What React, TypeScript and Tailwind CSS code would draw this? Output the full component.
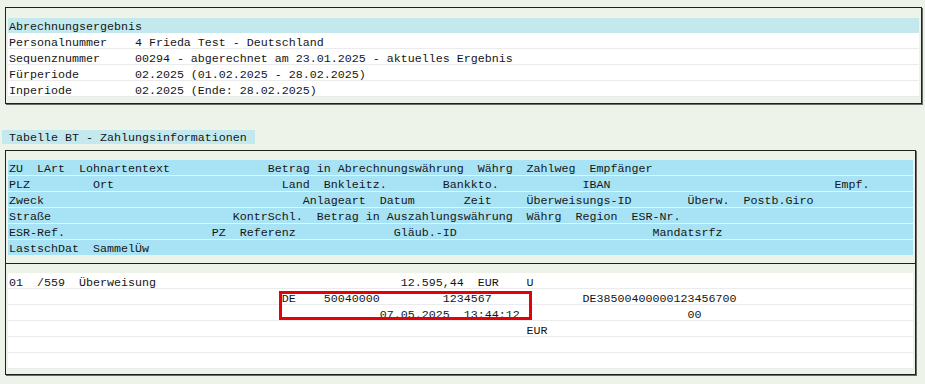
const at = (...segs: [number, string][]) => {
  let s = "";
  for (const [col, text] of segs) s = s.padEnd(col, " ") + text;
  return s;
};

const summary = [
  at([0, "Personalnummer"], [18, "4 Frieda Test - Deutschland"]),
  at([0, "Sequenznummer"], [18, "00294 - abgerechnet am 23.01.2025 - aktuelles Ergebnis"]),
  at([0, "Fürperiode"], [18, "02.2025 (01.02.2025 - 28.02.2025)"]),
  at([0, "Inperiode"], [18, "02.2025 (Ende: 28.02.2025)"]),
];

const headers = [
  at([0, "ZU"], [4, "LArt"], [10, "Lohnartentext"], [37, "Betrag in Abrechnungswährung"], [67, "Währg"], [74, "Zahlweg"], [83, "Empfänger"]),
  at([0, "PLZ"], [12, "Ort"], [39, "Land"], [45, "Bnkleitz."], [62, "Bankkto."], [82, "IBAN"], [118, "Empf."]),
  at([0, "Zweck"], [42, "Anlageart"], [53, "Datum"], [65, "Zeit"], [74, "Überweisungs-ID"], [97, "Überw."], [105, "Postb.Giro"]),
  at([0, "Straße"], [32, "KontrSchl."], [44, "Betrag in Auszahlungswährung"], [74, "Währg"], [81, "Region"], [89, "ESR-Nr."]),
  at([0, "ESR-Ref."], [29, "PZ"], [33, "Referenz"], [55, "Gläub.-ID"], [92, "Mandatsrfz"]),
  at([0, "LastschDat"], [12, "SammelÜw"]),
];

const data = [
  at([0, "01"], [4, "/559"], [10, "Überweisung"], [56, "12.595,44"], [67, "EUR"], [74, "U"]),
  at([39, "DE"], [45, "50040000"], [62, "1234567"], [82, "DE38500400000123456700"]),
  at([53, "07.05.2025"], [65, "13:44:12"], [97, "00"]),
  at([74, "EUR"]),
  "",
  "",
];

export default function App() {
  return (
    <div className="w-[925px] h-[384px] overflow-hidden bg-[#eef3e9] pt-[7px] pl-[5px] font-['Liberation_Mono','Courier_New',monospace] text-[11.67px] text-[#161616] whitespace-pre">
      {/* Abrechnungsergebnis */}
      <div className="w-[917px] h-[97px] border border-[#1f1f1f] shadow-[1px_1px_0_#6b6b6b] pt-[10px] px-[2px]">
        <div className="h-[15px] leading-[15px] pt-[2px] bg-[#c3e9ee] pl-[1px]">Abrechnungsergebnis</div>
        {summary.map((line, i) => (
          <div key={i} className="h-[16px] leading-[16px] pt-[2px] bg-white border-b border-[#ebebeb] pl-[1px]">
            {line}
          </div>
        ))}
      </div>

      {/* Tabelle BT */}
      <div className="mt-[26px] -ml-[3px] w-[253px] h-[14px] leading-[14px] pt-[1px] bg-[#c3e9ee] pl-[7px]">
        Tabelle BT - Zahlungsinformationen
      </div>

      <div className="relative mt-[6px] w-[911px] h-[225px] border border-[#1f1f1f] shadow-[1px_1px_0_#6b6b6b]">
        <div className="pt-[9px] px-[2px] pb-[7px]">
          {headers.map((line, i) => (
            <div key={i} className="h-[15px] leading-[15px] pt-[2px] mb-[1px] bg-[#a7e3f4] pl-[1px]">
              {line}
            </div>
          ))}
        </div>
        <div className="border-t border-[#1f1f1f] pt-[9px] px-[2px]">
          {data.map((line, i) => (
            <div key={i} className="h-[16px] leading-[16px] pt-[2px] bg-white border-b border-[#ebebeb] pl-[1px]">
              {line}
            </div>
          ))}
        </div>
        <div className="absolute left-[273px] top-[140px] w-[253px] h-[29px] border-[3px] border-[#e6000a]" />
      </div>
    </div>
  );
}
